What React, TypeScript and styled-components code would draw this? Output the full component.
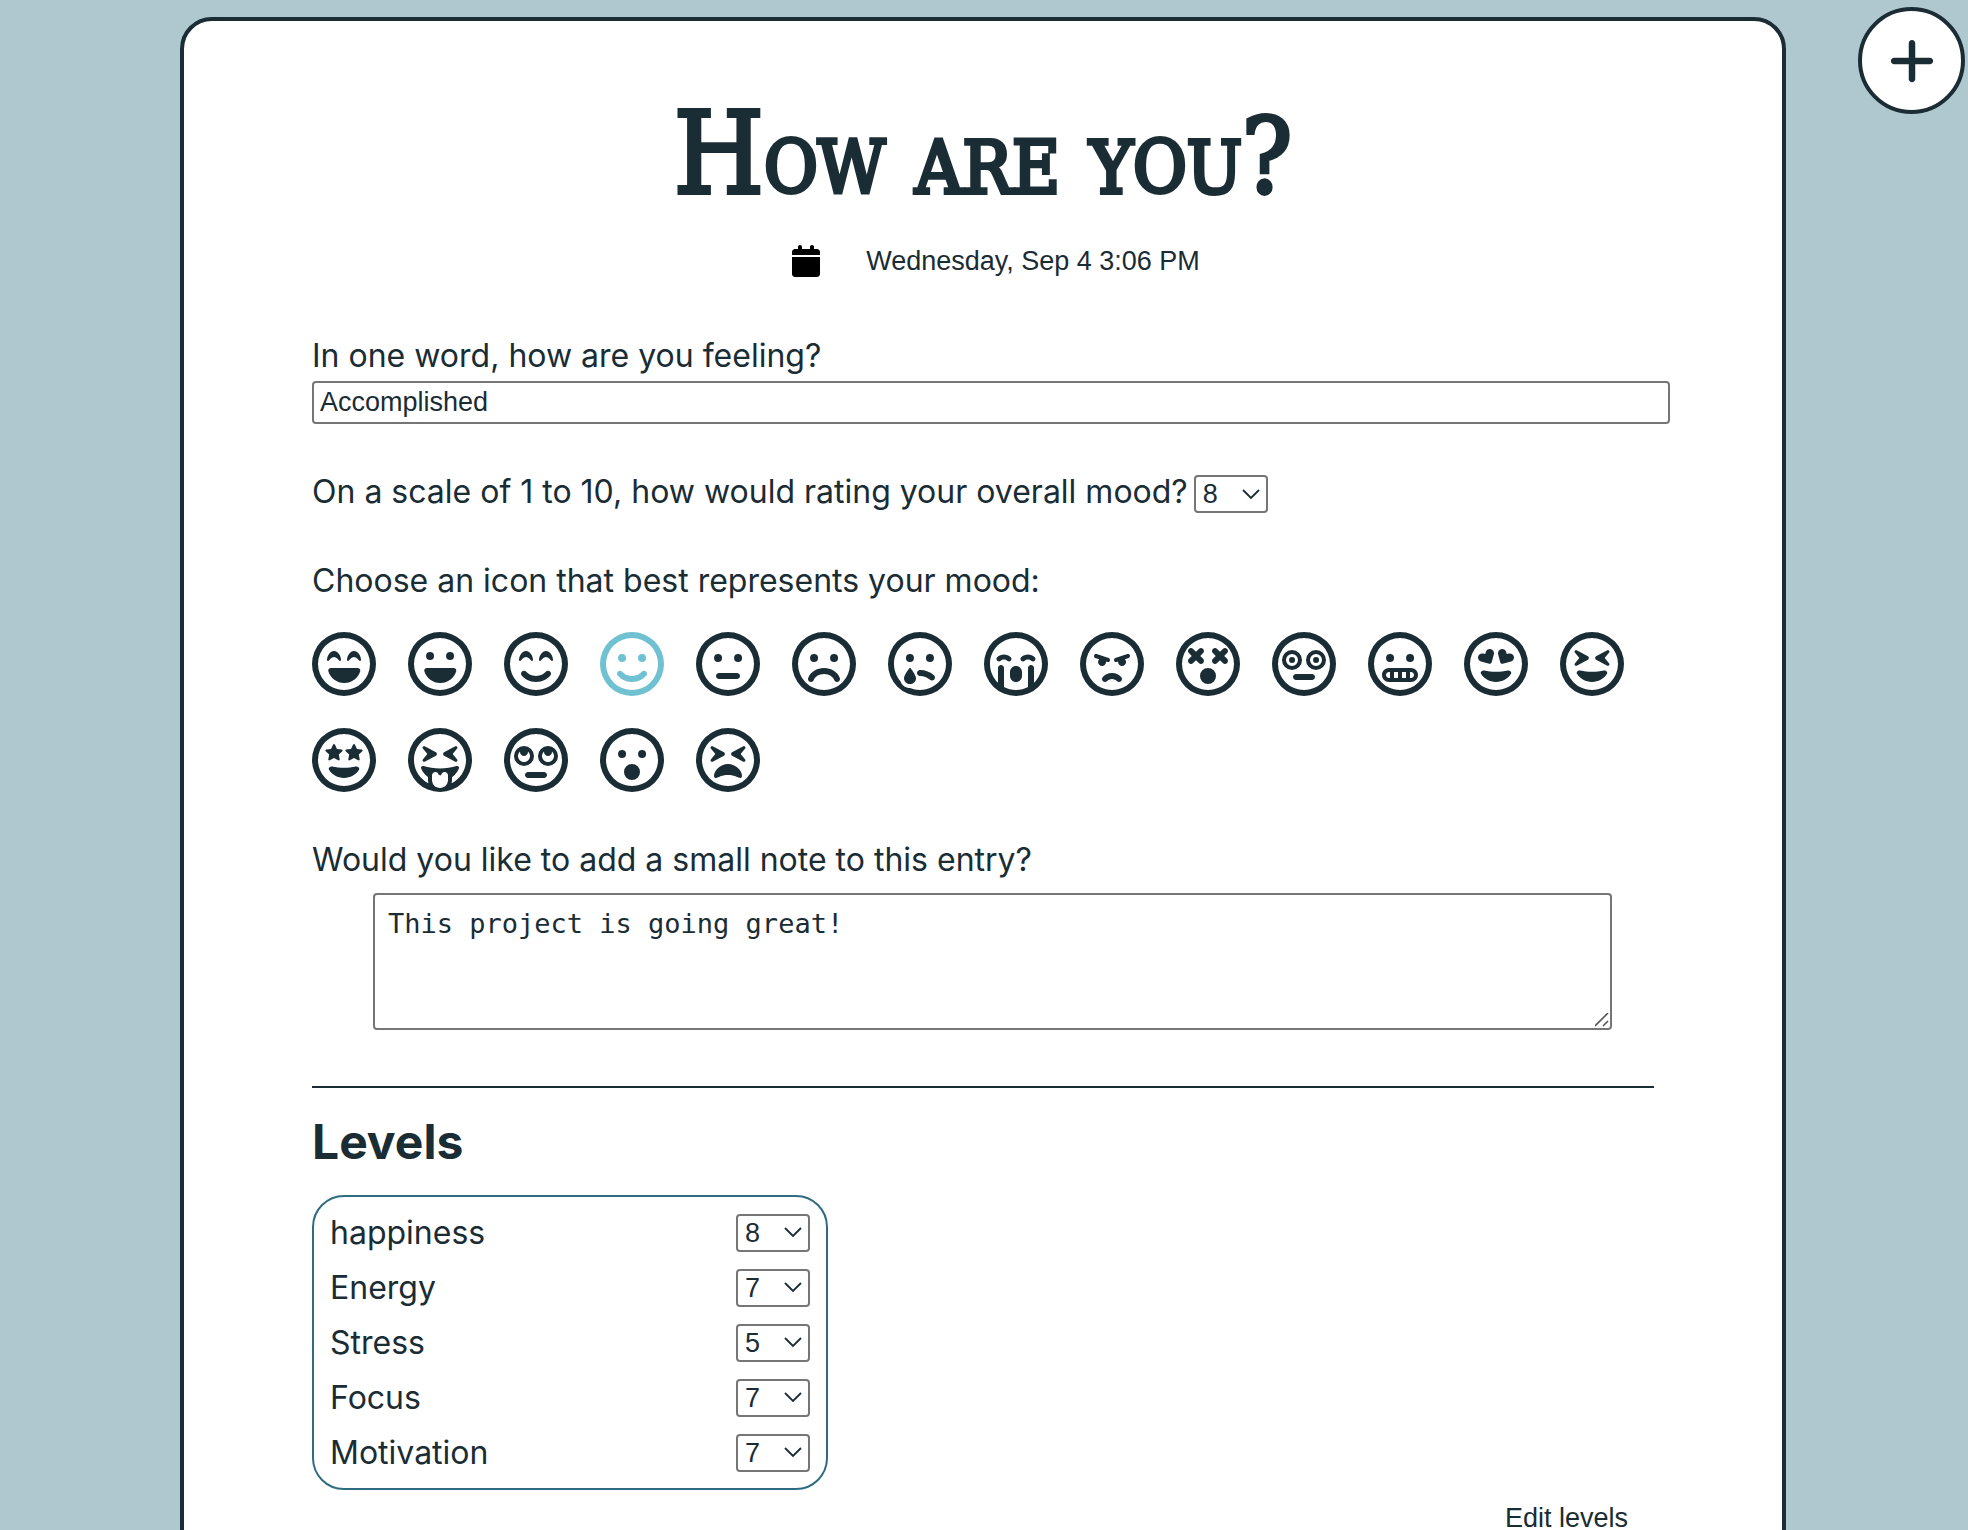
import React, { useState } from "react";
import styled, { createGlobalStyle } from "styled-components";
import {
  FaCalendar,
  FaPlus,
  FaRegFaceAngry,
  FaRegFaceDizzy,
  FaRegFaceFlushed,
  FaRegFaceFrown,
  FaRegFaceGrimace,
  FaRegFaceGrinHearts,
  FaRegFaceGrinSquint,
  FaRegFaceGrinStars,
  FaRegFaceGrinTongueSquint,
  FaRegFaceLaugh,
  FaRegFaceLaughBeam,
  FaRegFaceMeh,
  FaRegFaceRollingEyes,
  FaRegFaceSadCry,
  FaRegFaceSadTear,
  FaRegFaceSmile,
  FaRegFaceSmileBeam,
  FaRegFaceSurprise,
  FaRegFaceTired,
} from "react-icons/fa6";

const ink = "#1a2c34";
const accent = "#70c1d2";
const panelBorder = "#2f6b81";
const fieldBorder = "#767676";
const controlFont = `"Liberation Sans", Arial, sans-serif`;

const chevron = `url("data:image/svg+xml,%3Csvg xmlns='http://www.w3.org/2000/svg' width='18' height='11' viewBox='0 0 18 11'%3E%3Cpath d='M1 1l8 8L17 1' fill='none' stroke='%231a2c34' stroke-width='1.8'/%3E%3C/svg%3E")`;
const grip = `url("data:image/svg+xml,%3Csvg xmlns='http://www.w3.org/2000/svg' width='15' height='15' viewBox='0 0 15 15'%3E%3Cpath d='M0 13L13 0M8 13L13 8' fill='none' stroke='%23555' stroke-width='1.6'/%3E%3C/svg%3E")`;

const GlobalStyle = createGlobalStyle`
  *, *::before, *::after { box-sizing: border-box; }
  body {
    margin: 0;
    background: #afc8cf;
    color: ${ink};
    font: 400 32px/40px Inter, "Liberation Sans", sans-serif;
  }
  button, input, select, textarea { color: inherit; }
`;

const Page = styled.div`
  height: 100vh;
  overflow-y: auto;
  scrollbar-width: none;
`;

const Card = styled.main`
  margin: 17px 182px 64px 180px;
  padding: 68px 128px 96px;
  background: #fff;
  border: 4px solid ${ink};
  border-radius: 32px;
`;

const Title = styled.h1`
  margin: 0 0 24px;
  font-family: "DejaVu Serif Condensed", "DejaVu Serif", serif;
  font-size: 104px;
  font-stretch: condensed;
  font-weight: 400;
  font-variant: small-caps;
  line-height: 128px;
  text-align: center;
  -webkit-text-stroke: 4px ${ink};

  &::first-letter {
    font-size: 115px;
  }
`;

const DateButton = styled.button`
  display: flex;
  align-items: center;
  gap: 46px;
  margin: 0 auto 59px;
  padding: 0 0 0 26px;
  border: 0;
  background: none;
  font: 27px/32px ${controlFont};
  cursor: pointer;

  svg {
    width: 28px;
    height: 32px;
    color: #000;
  }
`;

const Questions = styled.form`
  display: flex;
  flex-direction: column;
  gap: 48px;
`;

const Field = styled.div`
  display: flex;
  flex-direction: column;
`;

const InlineField = styled.div`
  display: flex;
  align-items: baseline;
  gap: 6px;
`;

const WordInput = styled.input`
  width: calc(100% + 16px);
  height: 43px;
  margin-top: 5px;
  padding: 0 6px;
  border: 2px solid ${fieldBorder};
  border-radius: 4px;
  background: #fff;
  font: 27px/32px ${controlFont};
`;

const RatingSelect = styled.select`
  flex: none;
  appearance: none;
  width: 74px;
  height: 38px;
  padding: 0 7px;
  border: 2px solid ${fieldBorder};
  border-radius: 4px;
  background: #fff ${chevron} no-repeat right 6px center;
  font: 27px/34px ${controlFont};
`;

const Faces = styled.div`
  display: flex;
  flex-wrap: wrap;
  gap: 32px;
  margin-top: 31px;
`;

const FaceButton = styled.button<{ $selected: boolean }>`
  display: block;
  width: 64px;
  height: 64px;
  padding: 0;
  border: 0;
  border-radius: 50%;
  background: none;
  color: ${(p) => (p.$selected ? accent : ink)};
  cursor: pointer;

  svg {
    display: block;
    width: 100%;
    height: 100%;
  }
`;

const Note = styled.textarea`
  height: 137px;
  margin: 13px 42px 0 61px;
  padding: 13px;
  border: 2px solid ${fieldBorder};
  border-radius: 4px;
  background: #fff;
  font: 27px/32px "DejaVu Sans Mono", monospace;
  resize: vertical;

  &::-webkit-resizer {
    background: ${grip} no-repeat;
  }
`;

const Divider = styled.hr`
  margin: 56px 0 25px;
  border: 0;
  border-top: 2px solid ${ink};
`;

const SectionTitle = styled.h2`
  margin: 0 0 25px;
  font-size: 48px;
  font-weight: 700;
  line-height: 57px;
`;

const LevelList = styled.div`
  display: flex;
  flex-direction: column;
  gap: 16px;
  width: 516px;
  max-width: 100%;
  padding: 16px;
  border: 2px solid ${panelBorder};
  border-radius: 32px;
`;

const LevelRow = styled.div`
  display: flex;
  align-items: center;
  justify-content: space-between;
  height: 39px;
`;

const EditButton = styled.button`
  display: block;
  margin: 12px 26px 0 auto;
  padding: 0;
  border: 0;
  background: none;
  font: 27px/32px ${controlFont};
  cursor: pointer;
`;

const AddButton = styled.button`
  position: fixed;
  top: 7px;
  right: 3px;
  display: grid;
  place-items: center;
  width: 107px;
  height: 107px;
  padding: 0;
  border: 4px solid ${ink};
  border-radius: 50%;
  background: #fff;
  cursor: pointer;

  svg {
    width: 52px;
    height: 52px;
  }
`;

const faces = [
  { name: "Laughing, beaming", Icon: FaRegFaceLaughBeam },
  { name: "Laughing", Icon: FaRegFaceLaugh },
  { name: "Beaming", Icon: FaRegFaceSmileBeam },
  { name: "Smiling", Icon: FaRegFaceSmile },
  { name: "Neutral", Icon: FaRegFaceMeh },
  { name: "Frowning", Icon: FaRegFaceFrown },
  { name: "Tearful", Icon: FaRegFaceSadTear },
  { name: "Crying", Icon: FaRegFaceSadCry },
  { name: "Angry", Icon: FaRegFaceAngry },
  { name: "Dizzy", Icon: FaRegFaceDizzy },
  { name: "Flushed", Icon: FaRegFaceFlushed },
  { name: "Grimacing", Icon: FaRegFaceGrimace },
  { name: "In love", Icon: FaRegFaceGrinHearts },
  { name: "Grinning", Icon: FaRegFaceGrinSquint },
  { name: "Starstruck", Icon: FaRegFaceGrinStars },
  { name: "Silly", Icon: FaRegFaceGrinTongueSquint },
  { name: "Rolling eyes", Icon: FaRegFaceRollingEyes },
  { name: "Surprised", Icon: FaRegFaceSurprise },
  { name: "Tired", Icon: FaRegFaceTired },
];

const levels = [
  { name: "happiness", value: 8 },
  { name: "Energy", value: 7 },
  { name: "Stress", value: 5 },
  { name: "Focus", value: 7 },
  { name: "Motivation", value: 7 },
];

function Rating({ id, value }: { id: string; value: number }) {
  return (
    <RatingSelect id={id} defaultValue={value}>
      {Array.from({ length: 10 }, (_, i) => (
        <option key={i} value={i + 1}>
          {i + 1}
        </option>
      ))}
    </RatingSelect>
  );
}

export default function App() {
  const [face, setFace] = useState("Smiling");

  return (
    <Page>
      <GlobalStyle />
      <Card>
        <Title>How are you?</Title>
        <DateButton type="button">
          <FaCalendar aria-hidden />
          <span>Wednesday, Sep 4 3:06 PM</span>
        </DateButton>

        <Questions>
          <Field>
            <label htmlFor="word">In one word, how are you feeling?</label>
            <WordInput id="word" type="text" defaultValue="Accomplished" />
          </Field>
          <InlineField>
            <label htmlFor="mood">
              On a scale of 1 to 10, how would rating your overall mood?
            </label>
            <Rating id="mood" value={8} />
          </InlineField>
          <Field>
            <span id="faces-label">
              Choose an icon that best represents your mood:
            </span>
            <Faces role="group" aria-labelledby="faces-label">
              {faces.map(({ name, Icon }) => (
                <FaceButton
                  key={name}
                  type="button"
                  aria-label={name}
                  aria-pressed={face === name}
                  $selected={face === name}
                  onClick={() => setFace(name)}
                >
                  <Icon />
                </FaceButton>
              ))}
            </Faces>
          </Field>
          <Field>
            <label htmlFor="note">
              Would you like to add a small note to this entry?
            </label>
            <Note id="note" defaultValue="This project is going great!" />
          </Field>
        </Questions>

        <Divider />

        <SectionTitle>Levels</SectionTitle>
        <LevelList>
          {levels.map(({ name, value }) => (
            <LevelRow key={name}>
              <label htmlFor={`level-${name}`}>{name}</label>
              <Rating id={`level-${name}`} value={value} />
            </LevelRow>
          ))}
        </LevelList>
        <EditButton type="button">Edit levels</EditButton>
      </Card>
      <AddButton type="button" aria-label="Add entry">
        <FaPlus aria-hidden />
      </AddButton>
    </Page>
  );
}
